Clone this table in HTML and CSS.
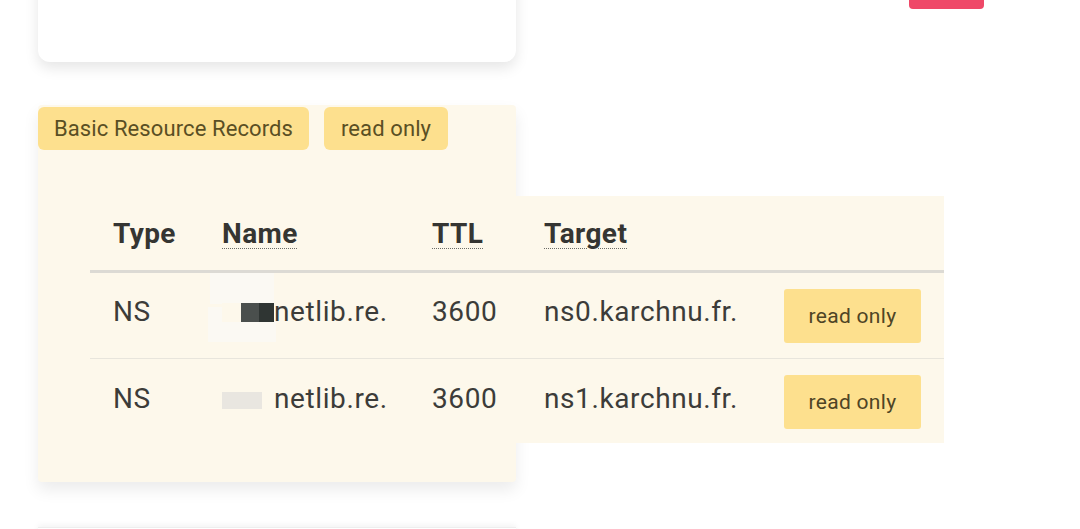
FILE: index.html
```html
<!DOCTYPE html>
<html>
<head>
<meta charset="utf-8">
<link rel="stylesheet" href="styles.css">
</head>
<body>
<div class="top-row">
  <div class="top-card"></div>
  <div class="pink-btn"></div>
</div>

<section class="rr-card">
  <div class="tags">
    <span class="tag">Basic Resource Records</span>
    <span class="tag ro">read only</span>
  </div>
  <table class="rr-table">
    <thead>
      <tr>
        <th class="c-type">Type</th>
        <th class="c-name"><abbr>Name</abbr></th>
        <th class="c-ttl"><abbr>TTL</abbr></th>
        <th class="c-target"><abbr>Target</abbr></th>
        <th class="c-act"></th>
      </tr>
    </thead>
    <tbody>
      <tr class="row-first">
        <td>NS</td>
        <td class="name"><span class="redact r1"></span>netlib.re.</td>
        <td>3600</td>
        <td>ns0.karchnu.fr.</td>
        <td class="act"><span class="btn">read only</span></td>
      </tr>
      <tr class="row-last">
        <td>NS</td>
        <td class="name"><span class="redact r2"></span>netlib.re.</td>
        <td>3600</td>
        <td>ns1.karchnu.fr.</td>
        <td class="act"><span class="btn">read only</span></td>
      </tr>
    </tbody>
  </table>
</section>

<div class="bottom-card"></div>
</body>
</html>
```

FILE: styles.css
```css
html, body {
  margin: 0;
  padding: 0;
  background: #ffffff;
  font-family: Roboto, "Noto Sans", "Liberation Sans", sans-serif;
  overflow: hidden;
}

.top-row {
  display: flex;
  align-items: flex-start;
  margin-top: -40px;
}

.top-card {
  margin-left: 38px;
  width: 478px;
  height: 102px;
  background: #ffffff;
  border-radius: 0 0 12px 12px;
  box-shadow: 0 6px 14px rgba(0, 0, 0, 0.10);
}

.pink-btn {
  margin-left: 393px;
  width: 75px;
  height: 49px;
  background: #ef4868;
  border-radius: 4px;
}

.rr-card {
  margin: 43px 0 0 38px;
  width: 478px;
  height: 377px;
  background: #fdf8eb;
  box-shadow: 0 8px 16px rgba(0, 0, 0, 0.08);
  border-radius: 4px;
}

.tags {
  display: flex;
  gap: 15px;
  padding-top: 2px;
}

.tag {
  display: inline-block;
  height: 43px;
  line-height: 43px;
  padding: 0 16px;
  background: #fde08e;
  color: #5a4f24;
  font-size: 22px;
  letter-spacing: 0.1px;
  border-radius: 6px;
}

.tag.ro {
  padding: 0 17px;
}

.rr-table {
  margin: 46px 0 0 52px;
  width: 854px;
  border-collapse: collapse;
  background: #fdf8eb;
  color: #3c3c39;
  font-size: 28px;
  letter-spacing: 0.6px;
}

.rr-table th {
  height: 74px;
  text-align: left;
  font-weight: 700;
  font-size: 28px;
  letter-spacing: 0.4px;
  color: #353532;
  padding: 0 0 0 23px;
  border-bottom: 3px solid #dcdad4;
  vertical-align: middle;
}

.rr-table abbr {
  text-decoration: underline dotted #6b6b66;
  text-underline-offset: 5px;
  text-decoration-thickness: 1px;
}

.c-type { width: 86px; }
.c-name { width: 187px; }
.c-ttl { width: 89px; }
.c-target { width: 217px; }

.rr-table td {
  padding: 22px 0 0 23px;
  height: 87px;
  vertical-align: top;
  box-sizing: border-box;
  white-space: nowrap;
}

.rr-table tr.row-first td {
  border-bottom: 1px solid #e8e5dc;
}

.rr-table tr.row-last td {
  height: 84px;
  padding-top: 23px;
}

.rr-table tr td.act {
  padding: 16px 23px 0 23px;
  letter-spacing: 0;
}

.btn {
  display: inline-block;
  width: 137px;
  height: 54px;
  line-height: 54px;
  text-align: center;
  background: #fde08e;
  color: #4e4425;
  font-size: 21px;
  letter-spacing: 0.3px;
  border-radius: 3px;
}

.redact {
  display: inline-block;
  width: 52px;
  height: 24px;
  vertical-align: -3px;
}

.redact.r1 {
  background: linear-gradient(90deg, transparent 0 19px, #4a4f4d 19px 37px, #2f3533 37px 52px);
  height: 19px;
  vertical-align: -1px;
  box-shadow: -6px -24px 0 6px #fbf9f3, -6px 12px 0 8px #fbf9f3;
}

.redact.r2 {
  background: linear-gradient(90deg, #e9e6e0 0 40px, transparent 40px);
  height: 17px;
  vertical-align: -1px;
}

.bottom-card {
  margin: 45px 0 0 38px;
  width: 478px;
  height: 40px;
  background: #ffffff;
  border-top: 1px solid #eeeeee;
  box-shadow: 0 -2px 6px rgba(0, 0, 0, 0.05);
}
```
